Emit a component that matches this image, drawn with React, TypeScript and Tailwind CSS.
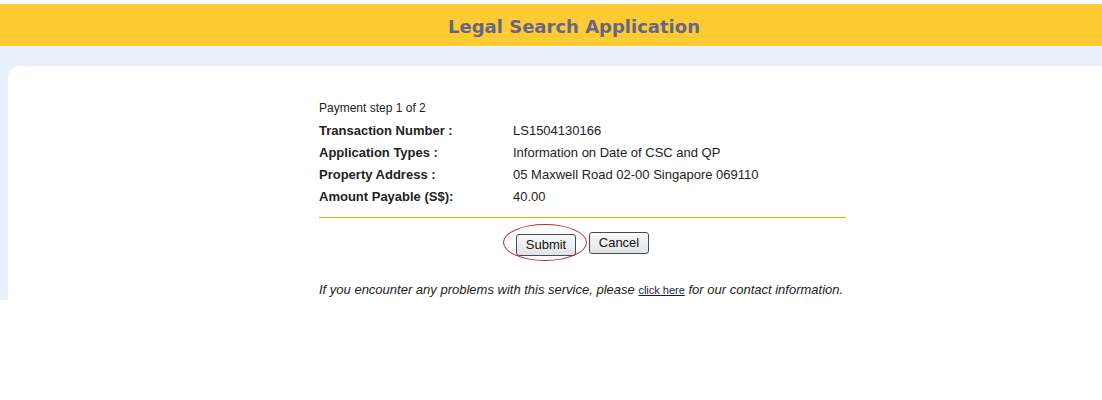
export default function App() {
  const rows = [
    ['Transaction Number :', 'LS1504130166'],
    ['Application Types :', 'Information on Date of CSC and QP'],
    ['Property Address :', '05 Maxwell Road 02-00 Singapore 069110'],
    ['Amount Payable (S$):', '40.00'],
  ];

  return (
    <div className="w-[1102px] h-[400px] bg-white font-['Liberation_Sans',Arial,sans-serif]">
      <div className="pt-[4px]">
        <div className="h-[42px] bg-[#fecb33] flex items-center justify-center pl-[46px] pt-[2px]">
          <h1 className="font-['DejaVu_Sans',Verdana,sans-serif] font-bold text-[18px] text-[#68658a]">
            Legal Search Application
          </h1>
        </div>
      </div>

      <div className="bg-[#e8f1fb] pt-[20px] pl-[8px] h-[254px] flex">
        <div className="flex-1 bg-white rounded-tl-[12px] pl-[311px]">
          <div className="w-[527px] pt-[35px]">
            <div className="text-[12px] text-[#222] leading-[14px]">Payment step 1 of 2</div>
            <div className="mt-[5px]">
              {rows.map(([label, value]) => (
                <div key={label} className="flex h-[22px] items-center text-[13px] text-[#222]">
                  <span className="w-[194px] font-bold">{label}</span>
                  <span>{value}</span>
                </div>
              ))}
            </div>
            <div className="mt-[9px] h-[1px] bg-[#d4b600]" />
            <div className="flex justify-center gap-[13px] mt-[14px]">
              <div className="relative">
                <button className="h-[22px] w-[60px] rounded-[3px] border border-[#3c4e62] bg-gradient-to-b from-[#fafafa] to-[#e2e2e2] text-[13px] text-[#111]">
                  Submit
                </button>
                <div className="absolute left-[-13px] top-[-8px] w-[84px] h-[37px] rounded-[50%] border border-[#c0283a] pointer-events-none" />
              </div>
              <button className="h-[22px] w-[60px] rounded-[3px] border border-[#3c4e62] bg-gradient-to-b from-[#fafafa] to-[#e2e2e2] text-[13px] text-[#111]">
                Cancel
              </button>
            </div>
            <p className="mt-[24px] text-[13px] italic text-[#222] whitespace-nowrap">
              If you encounter any problems with this service, please{' '}
              <a className="not-italic text-[11px] underline text-[#1a1a4a]">click here</a>{' '}
              for our contact information.
            </p>
          </div>
        </div>
      </div>
    </div>
  );
}
